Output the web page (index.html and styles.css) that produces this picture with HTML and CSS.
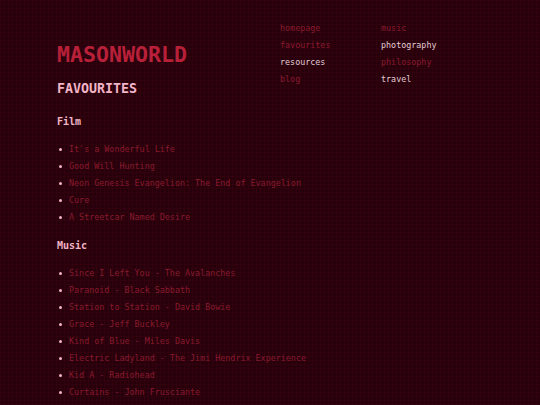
FILE: index.html
```html
<!DOCTYPE html>
<html>
<head>
<meta charset="utf-8">
<link rel="stylesheet" href="styles.css">
</head>
<body>
<div class="page">
  <header class="top">
    <div class="brand">
      <h1 class="title">MASONWORLD</h1>
      <h2 class="section">FAVOURITES</h2>
    </div>
    <nav class="nav">
      <a class="link">homepage</a>
      <a class="link">music</a>
      <a class="link">favourites</a>
      <a class="link visited">photography</a>
      <a class="link visited">resources</a>
      <a class="link">philosophy</a>
      <a class="link">blog</a>
      <a class="link visited">travel</a>
    </nav>
  </header>
  <h3 class="sub first">Film</h3>
  <ul class="list">
    <li>It's a Wonderful Life</li>
    <li>Good Will Hunting</li>
    <li>Neon Genesis Evangelion: The End of Evangelion</li>
    <li>Cure</li>
    <li>A Streetcar Named Desire</li>
  </ul>
  <h3 class="sub">Music</h3>
  <ul class="list">
    <li>Since I Left You - The Avalanches</li>
    <li>Paranoid - Black Sabbath</li>
    <li>Station to Station - David Bowie</li>
    <li>Grace - Jeff Buckley</li>
    <li>Kind of Blue - Miles Davis</li>
    <li>Electric Ladyland - The Jimi Hendrix Experience</li>
    <li>Kid A - Radiohead</li>
    <li>Curtains - John Frusciante</li>
  </ul>
</div>
</body>
</html>
```
FILE: styles.css
```css
html, body {
  margin: 0;
  padding: 0;
  height: 100%;
}
body {
  background-color: #28000b;
  background-image:
    repeating-linear-gradient(0deg, rgba(110, 20, 40, 0.10) 0 1px, transparent 1px 4px),
    repeating-linear-gradient(90deg, rgba(110, 20, 40, 0.10) 0 1px, transparent 1px 4px);
  font-family: "DejaVu Sans Mono", "Liberation Mono", monospace;
  overflow: hidden;
}
.page {
  padding: 20px 0 0 57px;
}
.top {
  display: flex;
}
.brand {
  width: 223px;
  padding-top: 23px;
}
.title {
  margin: 0;
  font-size: 21.6px;
  line-height: 24px;
  font-weight: bold;
  color: #b72038;
}
.section {
  margin: 14px 0 0;
  font-size: 13.3px;
  line-height: 16px;
  font-weight: bold;
  color: #f2b4c6;
}
.nav {
  display: grid;
  grid-template-columns: 101px 101px;
  grid-auto-rows: 17px;
  font-size: 8.4px;
  line-height: 17px;
}
.link {
  display: block;
  height: 17px;
  color: #8a1a2e;
}
.link.visited {
  color: #e2ccd4;
}
.sub {
  margin: 12px 0 0;
  font-size: 10px;
  line-height: 16px;
  font-weight: bold;
  color: #f2b4c6;
}
.sub.first {
  margin-top: 17px;
}
.list {
  list-style: none;
  margin: 11px 0 0;
  padding: 0;
  font-size: 8.4px;
  line-height: 17px;
  color: #881a2d;
}
.list li {
  display: flex;
  align-items: center;
  height: 17px;
}
.list li::before {
  content: "";
  width: 3px;
  height: 3px;
  border-radius: 50%;
  background: #f2b4c6;
  margin: 0 7px 0 2px;
  flex: none;
}
```
